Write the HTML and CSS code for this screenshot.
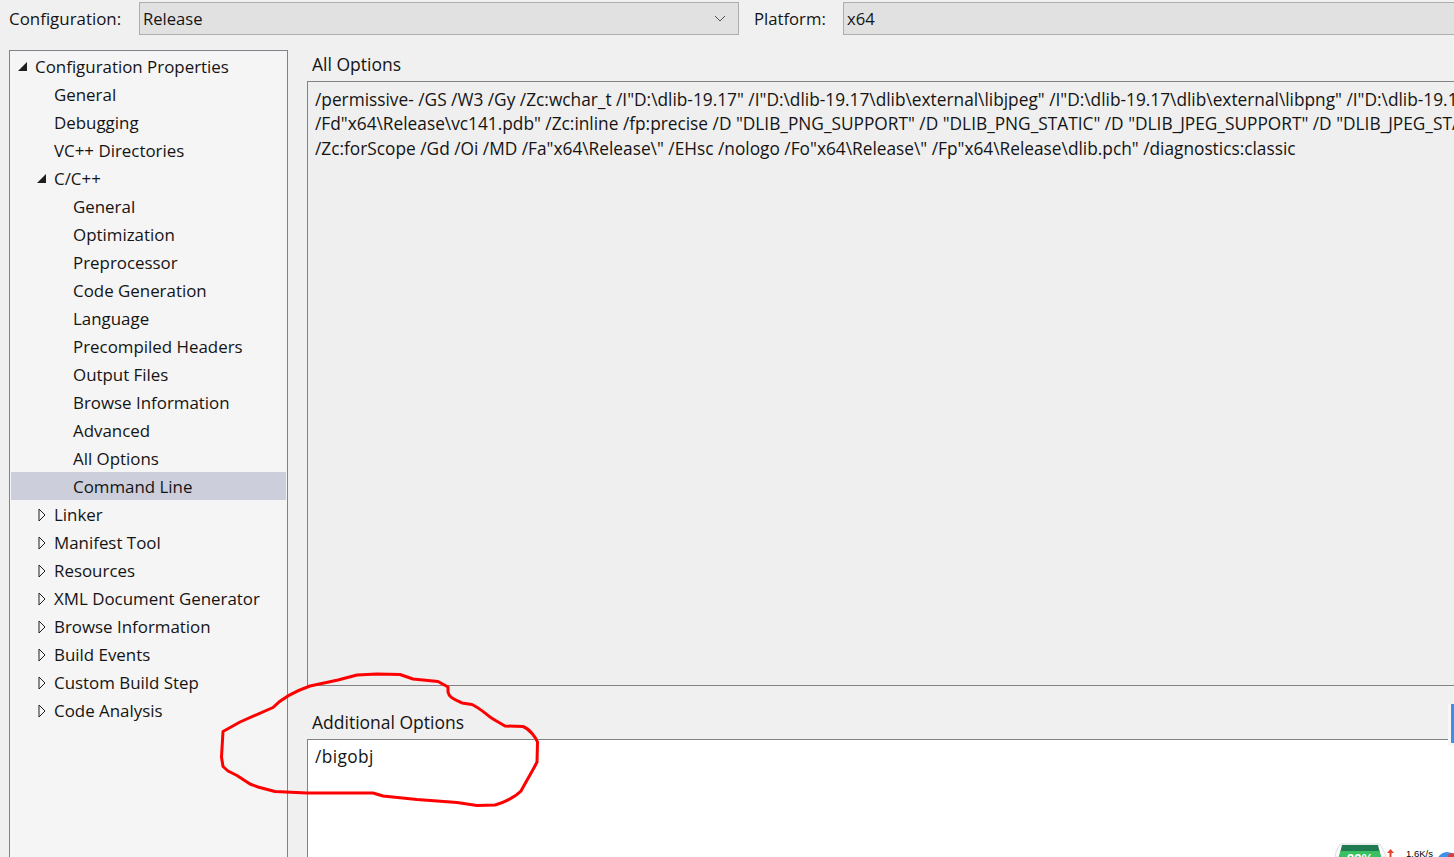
FILE: index.html
```html
<!DOCTYPE html>
<html lang="en">
<head>
<meta charset="utf-8">
<title>Property Pages</title>
<link rel="stylesheet" href="styles.css">
</head>
<body>
<div class="page">
  <header class="toolbar">
    <span class="tool-label config-label">Configuration:</span>
    <div class="select config-select">
      <span>Release</span>
      <svg class="chevron" width="12" height="7" viewBox="0 0 12 7"><path d="M1 1l5 5 5-5" fill="none" stroke="#555" stroke-width="1"/></svg>
    </div>
    <span class="tool-label platform-label">Platform:</span>
    <div class="select platform-select"><span>x64</span></div>
  </header>
  <div class="main">
    <nav class="tree">
      <div class="row l0"><svg class="arrow open" width="10" height="10" viewBox="0 0 10 10"><path d="M0 9h9V0z" fill="#1e1e1e"/></svg>Configuration Properties</div>
      <div class="row l1">General</div>
      <div class="row l1">Debugging</div>
      <div class="row l1">VC++ Directories</div>
      <div class="row l1"><svg class="arrow open" width="10" height="10" viewBox="0 0 10 10"><path d="M0 9h9V0z" fill="#1e1e1e"/></svg>C/C++</div>
      <div class="row l2">General</div>
      <div class="row l2">Optimization</div>
      <div class="row l2">Preprocessor</div>
      <div class="row l2">Code Generation</div>
      <div class="row l2">Language</div>
      <div class="row l2">Precompiled Headers</div>
      <div class="row l2">Output Files</div>
      <div class="row l2">Browse Information</div>
      <div class="row l2">Advanced</div>
      <div class="row l2">All Options</div>
      <div class="row l2 selected">Command Line</div>
      <div class="row l1"><svg class="arrow closed" width="8" height="14" viewBox="0 0 8 14"><path d="M1 1l6 6-6 6z" fill="none" stroke="#1e1e1e"/></svg>Linker</div>
      <div class="row l1"><svg class="arrow closed" width="8" height="14" viewBox="0 0 8 14"><path d="M1 1l6 6-6 6z" fill="none" stroke="#1e1e1e"/></svg>Manifest Tool</div>
      <div class="row l1"><svg class="arrow closed" width="8" height="14" viewBox="0 0 8 14"><path d="M1 1l6 6-6 6z" fill="none" stroke="#1e1e1e"/></svg>Resources</div>
      <div class="row l1"><svg class="arrow closed" width="8" height="14" viewBox="0 0 8 14"><path d="M1 1l6 6-6 6z" fill="none" stroke="#1e1e1e"/></svg>XML Document Generator</div>
      <div class="row l1"><svg class="arrow closed" width="8" height="14" viewBox="0 0 8 14"><path d="M1 1l6 6-6 6z" fill="none" stroke="#1e1e1e"/></svg>Browse Information</div>
      <div class="row l1"><svg class="arrow closed" width="8" height="14" viewBox="0 0 8 14"><path d="M1 1l6 6-6 6z" fill="none" stroke="#1e1e1e"/></svg>Build Events</div>
      <div class="row l1"><svg class="arrow closed" width="8" height="14" viewBox="0 0 8 14"><path d="M1 1l6 6-6 6z" fill="none" stroke="#1e1e1e"/></svg>Custom Build Step</div>
      <div class="row l1"><svg class="arrow closed" width="8" height="14" viewBox="0 0 8 14"><path d="M1 1l6 6-6 6z" fill="none" stroke="#1e1e1e"/></svg>Code Analysis</div>
    </nav>
    <section class="content">
      <h2 class="section-title">All Options</h2>
      <div class="options-box">
        <div class="cmd">/permissive- /GS /W3 /Gy /Zc:wchar_t /I"D:\dlib-19.17" /I"D:\dlib-19.17\dlib\external\libjpeg" /I"D:\dlib-19.17\dlib\external\libpng" /I"D:\dlib-19.17\dlib\external\zlib"</div>
        <div class="cmd">/Fd"x64\Release\vc141.pdb" /Zc:inline /fp:precise /D "DLIB_PNG_SUPPORT" /D "DLIB_PNG_STATIC" /D "DLIB_JPEG_SUPPORT" /D "DLIB_JPEG_STATIC"</div>
        <div class="cmd">/Zc:forScope /Gd /Oi /MD /Fa"x64\Release\" /EHsc /nologo /Fo"x64\Release\" /Fp"x64\Release\dlib.pch" /diagnostics:classic</div>
      </div>
      <h2 class="section-title additional-title">Additional Options</h2>
      <div class="additional-box"><div class="cmd bigobj">/bigobj</div></div>
    </section>
  </div>
</div>

<svg class="scribble" width="1454" height="857" viewBox="0 0 1454 857">
  <path d="M448 692C449 697 452 698 462 703L472 704.500C480 708 488 716 493 719L505 726L523 726.500C530 729 536 738 537.500 742L537 762C533 770 527 780 521 791C515 797 505 802 495 805L477 805.500L457 802.500L417 799.500L383 796L373 793L307 793L275 791.500L258 787L250 784L237 775.500L228 771L223 766.500L221.500 757L223 731.500L240 722L273 707.500C280 700 290 693 310 686L338 680L357 675L377 674L400 674.500L413 679L438 681.500L448 687Z" fill="none" stroke="#ff0000" stroke-width="3" stroke-linejoin="round"/>
</svg>

<div class="side-tab"></div>
<div class="net-widget">
  <svg class="gauge" width="52" height="14" viewBox="0 0 52 14">
    <path d="M0 14C1 8 3 3 6 1H44C47 3 49 8 51 14Z" fill="#fafafa" stroke="#dcdcdc"/>
    <path d="M4 14L7 2H43L46 14Z" fill="#1f7a52"/>
    <path d="M4 14L5.500 8H44.500L46 14Z" fill="#39c060"/>
  </svg>
  <span class="gauge-value">99%</span>
  <svg class="up-arrow" width="7" height="8" viewBox="0 0 7 8"><path d="M3.500 0L7 4H4.500V8H2.500V4H0Z" fill="#e8402a"/></svg>
  <span class="speed">1.6K/s</span>
  <svg class="orb" width="17" height="5" viewBox="0 0 17 5"><circle cx="10" cy="10" r="10" fill="#3f8fe6"/><circle cx="15" cy="5" r="4" fill="#d94040"/></svg>
</div>
</body>
</html>
```
FILE: styles.css
```css
* { box-sizing: border-box; }
html, body { margin: 0; height: 100%; overflow: hidden; }
body {
  background: #f0f0f0;
  color: #141414;
  font-family: "Open Sans", "Noto Sans", "Liberation Sans", sans-serif;
  font-size: 16.9px;
}
.page { width: 1454px; height: 857px; display: flex; flex-direction: column; padding-top: 2px; }
.toolbar { display: flex; align-items: center; height: 33px; padding-left: 9px; flex: none; }
.tool-label { white-space: nowrap; }
.config-label { width: 130px; }
.select {
  height: 33px;
  background: #e1e1e1;
  border: 1px solid #adadad;
  display: flex;
  align-items: center;
  justify-content: space-between;
  padding: 0 12px 0 3px;
  font-size: 16.6px;
}
.config-select { width: 600px; }
.platform-label { width: 89px; margin-left: 15px; font-size: 16.7px; }
.platform-select { width: 611px; border-right: 0; }
.main { display: flex; flex: 1; min-height: 0; padding: 15px 0 0 9px; }
.tree {
  width: 279px;
  flex: none;
  background: #f5f5f5;
  border: 1px solid #82828c;
  border-bottom: 0;
  padding: 1px 1px 0;
}
.row { position: relative; height: 28px; line-height: 30px; white-space: nowrap; color: #141414; }
.l0 { padding-left: 24px; }
.l1 { padding-left: 43px; }
.l2 { padding-left: 62px; }
.selected { background: #cccedb; }
.arrow { position: absolute; }
.open { top: 10px; }
.l0 .open { left: 7px; }
.l1 .open { left: 26px; }
.closed { left: 27px; top: 8px; }
.content { flex: 1; min-width: 0; display: flex; flex-direction: column; margin-left: 19px; overflow: hidden; }
.section-title { margin: 0; padding-left: 5px; font-weight: 400; font-size: 17.5px; line-height: 28px; height: 31px; flex: none; }
.options-box { height: 605px; flex: none; border: 1px solid #828282; border-right: 0; padding: 5.500px 0 0 7px; background: #efefef; }
.additional-title { height: 53px; padding-top: 22px; }
.additional-box { flex: 1; background: #fff; border: 1px solid #828282; border-right: 0; border-bottom: 0; padding: 5px 0 0 7px; }
.cmd { height: 24.5px; line-height: 24.5px; white-space: nowrap; color: #141414; font-size: 17.3px; }
.bigobj { letter-spacing: .4px; }
.scribble { position: absolute; left: 0; top: 0; pointer-events: none; }
.side-tab { position: absolute; right: 0; top: 704px; width: 6px; height: 42px; background: #f7f7f7; }
.side-tab::after { content: ""; position: absolute; right: 0; top: 0; width: 3px; height: 39px; background: #3a8ff0; }
.net-widget { position: absolute; left: 1330px; top: 843px; width: 124px; height: 14px; overflow: hidden; }
.gauge { position: absolute; left: 5px; top: 0; }
.gauge-value { position: absolute; left: 14px; top: 9px; width: 32px; text-align: center; font: 700 13px/14px "Liberation Sans", sans-serif; color: #fff; }
.up-arrow { position: absolute; left: 57px; top: 6px; }
.speed { position: absolute; left: 76px; top: 5px; font: 9.500px/11px "Liberation Sans", sans-serif; color: #000; }
.orb { position: absolute; left: 107px; top: 9px; }
```
